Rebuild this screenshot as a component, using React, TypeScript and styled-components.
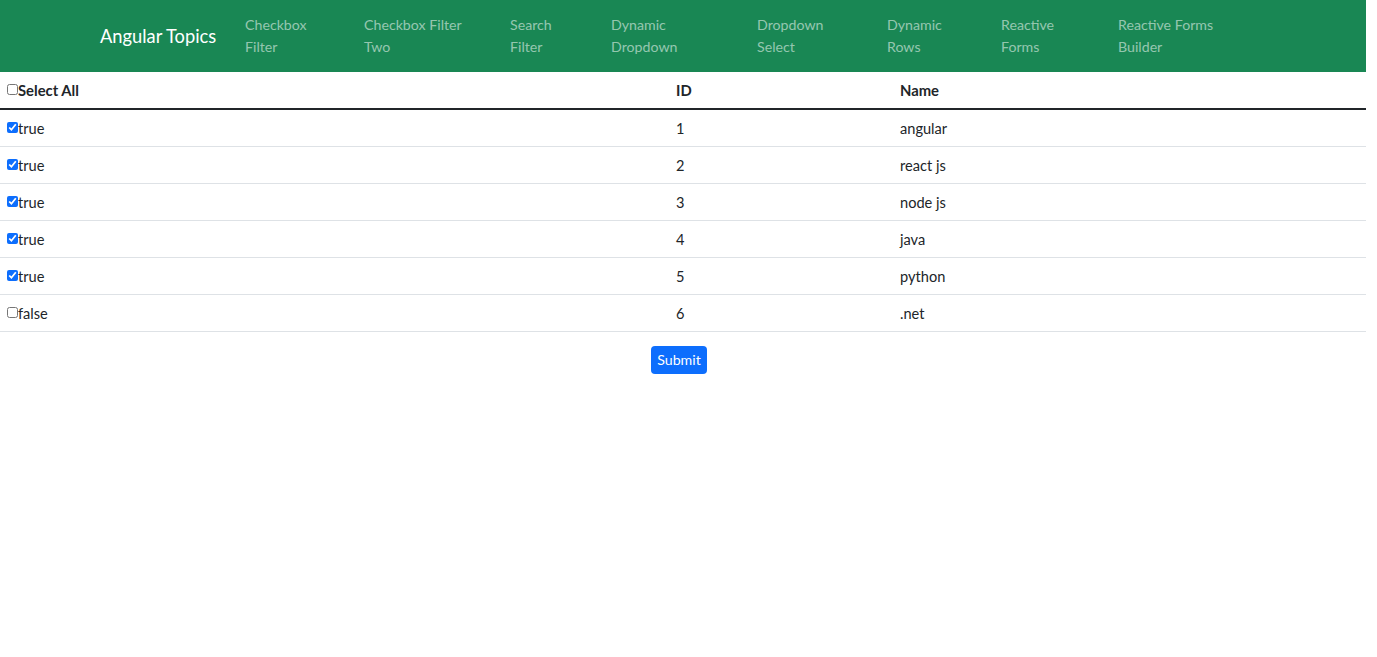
import React, { useState } from "react";
import styled, { createGlobalStyle } from "styled-components";

const Global = createGlobalStyle`
  html, body { margin: 0; padding: 0; background: #fff; }
  body { font-family: Lato, "Open Sans", sans-serif; color: #212529; }
  * { box-sizing: border-box; }
`;

const Page = styled.div`
  width: 1366px;
`;

const NavBar = styled.nav`
  height: 72px;
  background: #198754;
  display: flex;
  align-items: center;
  padding-left: 100px;
`;

const Brand = styled.a`
  color: #fff;
  font-size: 18.3px;
  line-height: 24px;
  width: 145px;
  flex: none;
  text-decoration: none;
  margin-top: -1px;
`;

const NavItem = styled.a<{ $w: number }>`
  width: ${(p) => p.$w}px;
  flex: none;
  color: rgba(255, 255, 255, 0.55);
  font-size: 14.2px;
  line-height: 22px;
  text-decoration: none;
  white-space: pre-line;
`;

const Table = styled.table`
  width: 100%;
  border-collapse: collapse;
  font-size: 14.6px;
`;

const Th = styled.th<{ $w?: number }>`
  text-align: left;
  font-weight: 700;
  font-size: 14.8px;
  height: 37px;
  padding: 0 8px;
  border-bottom: 2px solid #212529;
  width: ${(p) => (p.$w ? `${p.$w}px` : "auto")};
`;

const Td = styled.td`
  height: 37px;
  padding: 2px 8px 0;
  border-bottom: 1px solid #dee2e6;
`;

const CheckLabel = styled.label`
  display: inline-flex;
  align-items: center;
  margin-left: -1px;
`;

const Check = styled.input`
  width: 11px;
  height: 11px;
  margin: 0;
  accent-color: #0d6efd;
  position: relative;
  top: -1px;
`;

const Footer = styled.div`
  padding: 14px 0 0 651px;
`;

const SubmitButton = styled.button`
  width: 56px;
  height: 28px;
  border: none;
  border-radius: 4px;
  background: #0d6efd;
  color: #fff;
  font-family: Lato, "Open Sans", sans-serif;
  font-size: 14.2px;
  padding: 0;
`;

const navItems: [string, number][] = [
  ["Checkbox\nFilter", 119],
  ["Checkbox Filter\nTwo", 146],
  ["Search\nFilter", 101],
  ["Dynamic\nDropdown", 146],
  ["Dropdown\nSelect", 130],
  ["Dynamic\nRows", 114],
  ["Reactive\nForms", 117],
  ["Reactive Forms\nBuilder", 150],
];

const initial = [
  { id: 1, name: "angular", checked: true },
  { id: 2, name: "react js", checked: true },
  { id: 3, name: "node js", checked: true },
  { id: 4, name: "java", checked: true },
  { id: 5, name: "python", checked: true },
  { id: 6, name: ".net", checked: false },
];

export default function App() {
  const [rows, setRows] = useState(initial);
  const [all, setAll] = useState(false);
  return (
    <Page>
      <Global />
      <NavBar>
        <Brand>Angular Topics</Brand>
        {navItems.map(([t, w]) => (
          <NavItem key={t} $w={w}>
            {t}
          </NavItem>
        ))}
      </NavBar>
      <Table>
        <thead>
          <tr>
            <Th $w={668}>
              <CheckLabel>
                <Check
                  type="checkbox"
                  checked={all}
                  onChange={(e) => {
                    setAll(e.target.checked);
                    setRows(rows.map((r) => ({ ...r, checked: e.target.checked })));
                  }}
                />
                Select All
              </CheckLabel>
            </Th>
            <Th $w={224}>ID</Th>
            <Th>Name</Th>
          </tr>
        </thead>
        <tbody>
          {rows.map((r) => (
            <tr key={r.id}>
              <Td>
                <CheckLabel>
                  <Check
                    type="checkbox"
                    checked={r.checked}
                    onChange={(e) =>
                      setRows(rows.map((x) => (x.id === r.id ? { ...x, checked: e.target.checked } : x)))
                    }
                  />
                  {String(r.checked)}
                </CheckLabel>
              </Td>
              <Td>{r.id}</Td>
              <Td>{r.name}</Td>
            </tr>
          ))}
        </tbody>
      </Table>
      <Footer>
        <SubmitButton>Submit</SubmitButton>
      </Footer>
    </Page>
  );
}
